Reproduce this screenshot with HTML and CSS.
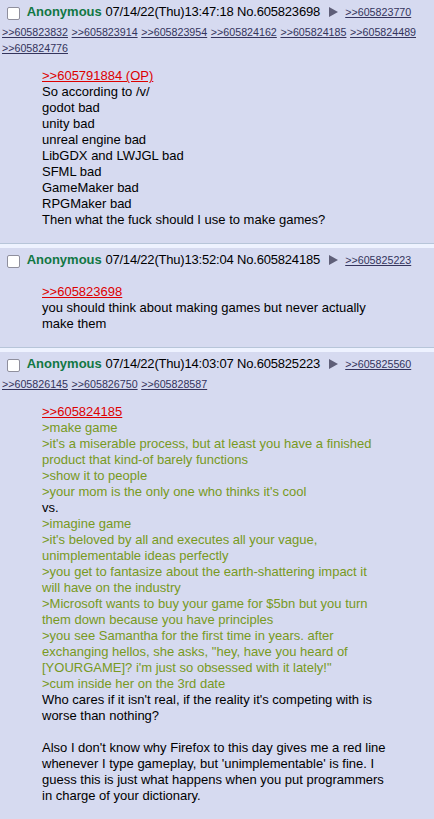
FILE: index.html
```html
<!DOCTYPE html>
<html lang="en">

<head>
    <meta charset="UTF-8">
    <meta name="viewport" content="width=device-width, initial-scale=1.0">
    <title>/v/ - Thread</title>
    <link rel="stylesheet" href="styles.css">
</head>

<body>
    <div class="thread">
        <div class="post">
            <div class="postInfo">
                <span class="check"></span> <span class="name">Anonymous</span>
                <span class="dateTime">07/14/22(Thu)13:47:18</span> <span class="postNum">No.605823698</span>
                <svg class="arrow" width="9" height="10" viewBox="0 0 9 10"><polygon points="0,0 9,5 0,10" /></svg>
                <a class="backlink" href="#">&gt;&gt;605823770</a>
                <a class="backlink" href="#">&gt;&gt;605823832</a>
                <a class="backlink" href="#">&gt;&gt;605823914</a>
                <a class="backlink" href="#">&gt;&gt;605823954</a>
                <a class="backlink" href="#">&gt;&gt;605824162</a>
                <a class="backlink" href="#">&gt;&gt;605824185</a>
                <a class="backlink" href="#">&gt;&gt;605824489</a>
                <a class="backlink" href="#">&gt;&gt;605824776</a>
            </div>
            <blockquote class="postMessage">
                <a class="quotelink" href="#">&gt;&gt;605791884 (OP)</a><br>
                So according to /v/<br>
                godot bad<br>
                unity bad<br>
                unreal engine bad<br>
                LibGDX and LWJGL bad<br>
                SFML bad<br>
                GameMaker bad<br>
                RPGMaker bad<br>
                Then what the fuck should I use to make games?
            </blockquote>
        </div>

        <div class="post">
            <div class="postInfo">
                <span class="check"></span> <span class="name">Anonymous</span>
                <span class="dateTime">07/14/22(Thu)13:52:04</span> <span class="postNum">No.605824185</span>
                <svg class="arrow" width="9" height="10" viewBox="0 0 9 10"><polygon points="0,0 9,5 0,10" /></svg>
                <a class="backlink" href="#">&gt;&gt;605825223</a>
            </div>
            <blockquote class="postMessage">
                <a class="quotelink" href="#">&gt;&gt;605823698</a><br>
                you should think about making games but never actually make them
            </blockquote>
        </div>

        <div class="post">
            <div class="postInfo">
                <span class="check"></span> <span class="name">Anonymous</span>
                <span class="dateTime">07/14/22(Thu)14:03:07</span> <span class="postNum">No.605825223</span>
                <svg class="arrow" width="9" height="10" viewBox="0 0 9 10"><polygon points="0,0 9,5 0,10" /></svg>
                <a class="backlink" href="#">&gt;&gt;605825560</a>
                <a class="backlink" href="#">&gt;&gt;605826145</a>
                <a class="backlink" href="#">&gt;&gt;605826750</a>
                <a class="backlink" href="#">&gt;&gt;605828587</a>
            </div>
            <blockquote class="postMessage">
                <a class="quotelink" href="#">&gt;&gt;605824185</a><br>
                <span class="quote">&gt;make game</span><br>
                <span class="quote">&gt;it's a miserable process, but at least you have a finished product that kind-of barely functions</span><br>
                <span class="quote">&gt;show it to people</span><br>
                <span class="quote">&gt;your mom is the only one who thinks it's cool</span><br>
                vs.<br>
                <span class="quote">&gt;imagine game</span><br>
                <span class="quote">&gt;it's beloved by all and executes all your vague, unimplementable ideas perfectly</span><br>
                <span class="quote">&gt;you get to fantasize about the earth-shattering impact it will have on the industry</span><br>
                <span class="quote">&gt;Microsoft wants to buy your game for $5bn but you turn them down because you have principles</span><br>
                <span class="quote">&gt;you see Samantha for the first time in years. after exchanging hellos, she asks, "hey, have you heard of [YOURGAME]? i'm just so obsessed with it lately!"</span><br>
                <span class="quote">&gt;cum inside her on the 3rd date</span><br>
                Who cares if it isn't real, if the reality it's competing with is worse than nothing?<br>
                <br>
                Also I don't know why Firefox to this day gives me a red line whenever I type gameplay, but 'unimplementable' is fine. I guess this is just what happens when you put programmers in charge of your dictionary.
            </blockquote>
        </div>
    </div>
</body>

</html>
```

FILE: styles.css
```css
body {
    margin: 0;
    background: #eef2ff;
    color: #000;
    font-family: "Liberation Sans", Arial, sans-serif;
    font-size: 13px;
}

.post {
    background: #d6daf0;
    border-bottom: 1px solid #b7c5d9;
    padding: 2px;
    margin-bottom: 4px;
}

.postInfo {
    line-height: 15px;
}

.check {
    display: inline-block;
    box-sizing: border-box;
    width: 13px;
    height: 13px;
    margin: 5px 3px 4px 5px;
    vertical-align: middle;
    background: #fff;
    border: 1px solid #8f8f9d;
    border-radius: 2px;
}

.name {
    color: #117743;
    font-weight: bold;
}

.dateTime,
.postNum {
    letter-spacing: -0.2px;
}

.arrow {
    fill: #5f5f78;
    vertical-align: -1px;
    margin: 0 4px 0 5px;
}

.backlink {
    color: #34345c;
    font-size: 10.7px;
    text-decoration: underline;
}

.postMessage {
    margin: 12px 45px 13px 40px;
    line-height: 16px;
    word-wrap: break-word;
}

.quotelink {
    color: #dd0000;
    text-decoration: underline;
}

.quote {
    color: #789922;
}
```
